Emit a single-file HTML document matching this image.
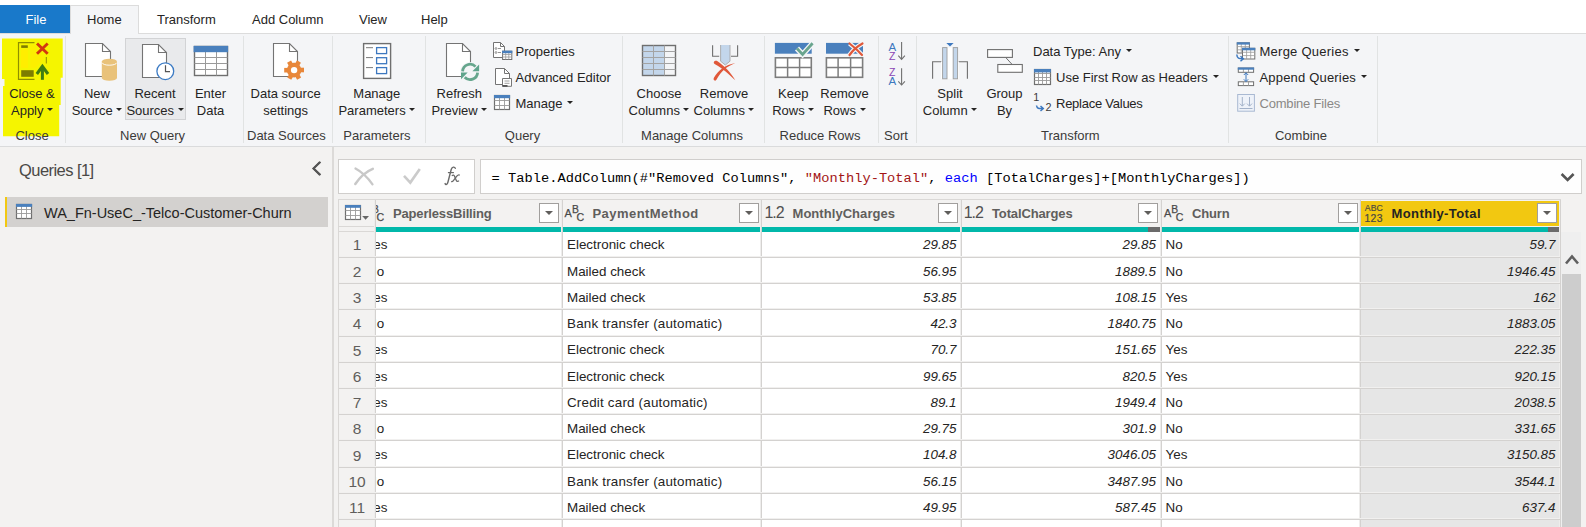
<!DOCTYPE html><html><head><meta charset="utf-8"><style>
html,body{margin:0;padding:0}
body{width:1586px;height:527px;overflow:hidden;position:relative;background:#f3f2f1;font-family:"Liberation Sans",sans-serif}
.t{position:absolute;white-space:nowrap}
.r{position:absolute}
.s{position:absolute;overflow:visible}
.dd{display:inline-block;width:0;height:0;border-left:3px solid transparent;border-right:3px solid transparent;border-top:3px solid #252423;margin-left:5px;vertical-align:4px}
</style></head><body>
<div class="r" style="left:0px;top:0px;width:1586px;height:33px;background:#ffffff;"></div><div class="r" style="left:0px;top:33px;width:1586px;height:114px;background:#f4f5f7;"></div><div class="r" style="left:0px;top:33px;width:1586px;height:1px;background:#dcdcdc;"></div><div class="r" style="left:0px;top:146px;width:1586px;height:1px;background:#dadbdc;"></div><div class="r" style="left:0px;top:5px;width:70px;height:28px;background:#1979ca;"></div><div class="t" style="left:25.50px;top:13.00px;font-size:13px;line-height:13px;color:#ffffff;font-weight:normal;font-style:normal;font-family:'Liberation Sans', sans-serif;">File</div><div class="r" style="left:70px;top:5px;width:69px;height:29px;background:#f4f5f7;box-sizing:border-box;border:1px solid #dcdcdc;border-bottom:none"></div><div class="t" style="left:87.00px;top:13.00px;font-size:13px;line-height:13px;color:#252423;font-weight:normal;font-style:normal;font-family:'Liberation Sans', sans-serif;">Home</div><div class="t" style="left:157.00px;top:13.00px;font-size:13px;line-height:13px;color:#252423;font-weight:normal;font-style:normal;font-family:'Liberation Sans', sans-serif;">Transform</div><div class="t" style="left:252.00px;top:13.00px;font-size:13px;line-height:13px;color:#252423;font-weight:normal;font-style:normal;font-family:'Liberation Sans', sans-serif;">Add Column</div><div class="t" style="left:359.00px;top:13.00px;font-size:13px;line-height:13px;color:#252423;font-weight:normal;font-style:normal;font-family:'Liberation Sans', sans-serif;">View</div><div class="t" style="left:421.00px;top:13.00px;font-size:13px;line-height:13px;color:#252423;font-weight:normal;font-style:normal;font-family:'Liberation Sans', sans-serif;">Help</div><div class="r" style="left:65px;top:36px;width:1px;height:107px;background:#e1e3e3;"></div><div class="r" style="left:243px;top:36px;width:1px;height:107px;background:#e1e3e3;"></div><div class="r" style="left:332px;top:36px;width:1px;height:107px;background:#e1e3e3;"></div><div class="r" style="left:425px;top:36px;width:1px;height:107px;background:#e1e3e3;"></div><div class="r" style="left:622px;top:36px;width:1px;height:107px;background:#e1e3e3;"></div><div class="r" style="left:764px;top:36px;width:1px;height:107px;background:#e1e3e3;"></div><div class="r" style="left:878px;top:36px;width:1px;height:107px;background:#e1e3e3;"></div><div class="r" style="left:916px;top:36px;width:1px;height:107px;background:#e1e3e3;"></div><div class="r" style="left:1228px;top:36px;width:1px;height:107px;background:#e1e3e3;"></div><div class="r" style="left:1377px;top:36px;width:1px;height:107px;background:#e1e3e3;"></div><svg class="s" style="left:0;top:0" width="70" height="150"><path d="M2 38.6 H62.7 V77.8 H60.7 V105 H59.2 V136.3 H3 V86 H4.5 V79 H2 Z" fill="#f5f500"/></svg><div class="r" style="left:125px;top:38px;width:61px;height:82px;background:#e9eaec;box-sizing:border-box;border:1px solid #d2d3d5"></div><svg class="s" style="left:0;top:0" width="1586" height="150" viewBox="0 0 1586 150"><rect x="20.9" y="49.6" width="7.1" height="18.3" fill="#ffee00"/><path d="M30.3 45 H34 L44 58.3 L35.5 68 H30.3 Z" fill="#fcef00"/><path d="M34.5 42.7 H18.5 V79.3 H34.5" fill="none" stroke="#8f8f00" stroke-width="1.2"/><line x1="46.3" y1="57" x2="46.3" y2="63.5" stroke="#8f8f00" stroke-width="1"/><rect x="21.2" y="45.3" width="6.6" height="2.6" fill="#7d7d00"/><rect x="21.2" y="70.2" width="12.5" height="6.6" fill="#7d7d00"/><path d="M37 43.5 L47.7 53.7 M47.7 43.5 L37 53.7" stroke="#d2380f" stroke-width="2.9"/><path d="M36.8 74 L42.4 66.3 L48 74" fill="none" stroke="#3f7d12" stroke-width="3"/><line x1="42.4" y1="66.5" x2="42.4" y2="79.8" stroke="#3f7d12" stroke-width="3"/><path d="M85.5 43.5 H102.5 L110.5 51.5 V76.5 H85.5 Z" fill="#fff" stroke="#747474" stroke-width="1.1"/><path d="M102.5 43.5 V51.5 H110.5" fill="none" stroke="#747474" stroke-width="1.1"/><path d="M101.8 61.5 A7.6 2.8 0 0 1 117 61.5 V78 A7.6 2.8 0 0 1 101.8 78 Z" fill="#e9c27a"/><path d="M102.3 62.8 A7.1 2.4 0 0 0 116.5 62.8" fill="none" stroke="#fff" stroke-width="0.9"/><path d="M142.5 44.5 H158.5 L166.5 52.5 V77.5 H142.5 Z" fill="#fff" stroke="#747474" stroke-width="1.1"/><path d="M158.5 44.5 V52.5 H166.5" fill="none" stroke="#747474" stroke-width="1.1"/><circle cx="165.3" cy="71.2" r="8.4" fill="#fff" stroke="#3c7bc4" stroke-width="1.3"/><path d="M165.5 65.2 V71.6 H170" fill="none" stroke="#555" stroke-width="1.2"/><rect x="194.5" y="46.5" width="33.0" height="29.0" fill="#fff" stroke="#6f6f6f" stroke-width="1.4"/><line x1="205.5" y1="46.5" x2="205.5" y2="75.5" stroke="#9a9a9a" stroke-width="1.0"/><line x1="216.5" y1="46.5" x2="216.5" y2="75.5" stroke="#9a9a9a" stroke-width="1.0"/><line x1="194.5" y1="57.5" x2="227.5" y2="57.5" stroke="#9a9a9a" stroke-width="1.0"/><line x1="194.5" y1="63.5" x2="227.5" y2="63.5" stroke="#9a9a9a" stroke-width="1.0"/><line x1="194.5" y1="69.5" x2="227.5" y2="69.5" stroke="#9a9a9a" stroke-width="1.0"/><rect x="193.6" y="45.9" width="34.5" height="6.3" fill="#4a80bd"/><path d="M273.5 43.5 H289.5 L297.5 51.5 V76.5 H273.5 Z" fill="#fff" stroke="#747474" stroke-width="1.1"/><path d="M289.5 43.5 V51.5 H297.5" fill="none" stroke="#747474" stroke-width="1.1"/><rect x="288" y="62" width="13" height="16" fill="#f4f5f7"/><rect x="-2.4" y="-9.9" width="4.6" height="4" transform="translate(294.1 70.1) rotate(30)" fill="#e8873a"/><rect x="-2.4" y="-9.9" width="4.6" height="4" transform="translate(294.1 70.1) rotate(90)" fill="#e8873a"/><rect x="-2.4" y="-9.9" width="4.6" height="4" transform="translate(294.1 70.1) rotate(150)" fill="#e8873a"/><rect x="-2.4" y="-9.9" width="4.6" height="4" transform="translate(294.1 70.1) rotate(210)" fill="#e8873a"/><rect x="-2.4" y="-9.9" width="4.6" height="4" transform="translate(294.1 70.1) rotate(270)" fill="#e8873a"/><rect x="-2.4" y="-9.9" width="4.6" height="4" transform="translate(294.1 70.1) rotate(330)" fill="#e8873a"/><circle cx="294.1" cy="70.1" r="7.3" fill="#e8873a"/><circle cx="294.1" cy="70.1" r="3.2" fill="#fff"/><rect x="363.6" y="43.6" width="27" height="34.8" fill="#fff" stroke="#6f6f6f" stroke-width="1.4"/><line x1="366" y1="47.7" x2="373" y2="47.7" stroke="#7a7a7a" stroke-width="1"/><line x1="366" y1="57.6" x2="373" y2="57.6" stroke="#7a7a7a" stroke-width="1"/><line x1="366" y1="67.6" x2="373" y2="67.6" stroke="#7a7a7a" stroke-width="1"/><rect x="376.6" y="47.6" width="10" height="6" fill="#fff" stroke="#3d78bf" stroke-width="1.3"/><rect x="376.6" y="57.7" width="10" height="6" fill="#fff" stroke="#3d78bf" stroke-width="1.3"/><rect x="376.6" y="67.6" width="10" height="6" fill="#fff" stroke="#3d78bf" stroke-width="1.3"/><path d="M446.5 43.5 H462.5 L470.5 51.5 V76.5 H446.5 Z" fill="#fff" stroke="#747474" stroke-width="1.1"/><path d="M462.5 43.5 V51.5 H470.5" fill="none" stroke="#747474" stroke-width="1.1"/><circle cx="470.1" cy="71.9" r="10" fill="#f4f5f7"/><path d="M462.6 71.3 A7.5 7.5 0 0 1 475.5 66.6" fill="none" stroke="#66a68d" stroke-width="2.8"/><path d="M479.1 64.6 V71.3 H472.4 Z" fill="#5fa48c"/><path d="M477.6 72.6 A7.5 7.5 0 0 1 464.7 77.3" fill="none" stroke="#66a68d" stroke-width="2.8"/><path d="M461 79.3 V72.6 H467.7 Z" fill="#5fa48c"/><path d="M493.5 42.5 H500.5 L504.5 46.5 V57.5 H493.5 Z" fill="#fff" stroke="#747474" stroke-width="1"/><path d="M500.5 42.5 V46.5 H504.5" fill="none" stroke="#747474" stroke-width="1"/><circle cx="496" cy="48.5" r="0.9" fill="none" stroke="#777" stroke-width="0.8"/><line x1="498" y1="48.5" x2="501" y2="48.5" stroke="#777" stroke-width="0.8"/><circle cx="496" cy="52.5" r="0.9" fill="none" stroke="#777" stroke-width="0.8"/><line x1="498" y1="52.5" x2="501" y2="52.5" stroke="#777" stroke-width="0.8"/><rect x="502.6" y="51.2" width="9.199999999999989" height="8.299999999999997" fill="#fff" stroke="#6f6f6f" stroke-width="1"/><line x1="505.7" y1="51.2" x2="505.7" y2="59.5" stroke="#9a9a9a" stroke-width="0.8"/><line x1="508.8" y1="51.2" x2="508.8" y2="59.5" stroke="#9a9a9a" stroke-width="0.8"/><line x1="502.6" y1="54.5" x2="511.8" y2="54.5" stroke="#9a9a9a" stroke-width="0.8"/><line x1="502.6" y1="57" x2="511.8" y2="57" stroke="#9a9a9a" stroke-width="0.8"/><rect x="502.1" y="50.7" width="10.2" height="2.5" fill="#4a80bd"/><path d="M495.5 68.5 H504.5 L509.5 73.5 V84.5 H495.5 Z" fill="#fff" stroke="#747474" stroke-width="1"/><path d="M504.5 68.5 V73.5 H509.5" fill="none" stroke="#747474" stroke-width="1"/><path d="M502.5 78.5 H511.5 V86.3 H502.5 Z" fill="#fff" stroke="#777" stroke-width="1"/><line x1="504.5" y1="81" x2="509.5" y2="81" stroke="#888" stroke-width="0.8"/><line x1="504.5" y1="83.3" x2="509.5" y2="83.3" stroke="#888" stroke-width="0.8"/><rect x="502.5" y="85" width="5" height="1.8" fill="#555"/><rect x="494.5" y="95.5" width="15.0" height="14.0" fill="#fff" stroke="#6f6f6f" stroke-width="1.2"/><line x1="499.5" y1="95.5" x2="499.5" y2="109.5" stroke="#9a9a9a" stroke-width="0.9"/><line x1="504.5" y1="95.5" x2="504.5" y2="109.5" stroke="#9a9a9a" stroke-width="0.9"/><line x1="494.5" y1="100.5" x2="509.5" y2="100.5" stroke="#9a9a9a" stroke-width="0.9"/><line x1="494.5" y1="105.5" x2="509.5" y2="105.5" stroke="#9a9a9a" stroke-width="0.9"/><rect x="494" y="95" width="16.1" height="3.2" fill="#4a80bd"/><rect x="642.6" y="45.5" width="22" height="30" fill="#c3d6eb"/><rect x="642.5" y="45.5" width="33.0" height="30.0" fill="none" stroke="#6f6f6f" stroke-width="1.4"/><line x1="653.5" y1="45.5" x2="653.5" y2="75.5" stroke="#a3a3a3" stroke-width="1.0"/><line x1="664.5" y1="45.5" x2="664.5" y2="75.5" stroke="#a3a3a3" stroke-width="1.0"/><line x1="642.5" y1="51.5" x2="675.5" y2="51.5" stroke="#a3a3a3" stroke-width="1.0"/><line x1="642.5" y1="57.5" x2="675.5" y2="57.5" stroke="#a3a3a3" stroke-width="1.0"/><line x1="642.5" y1="63.5" x2="675.5" y2="63.5" stroke="#a3a3a3" stroke-width="1.0"/><line x1="642.5" y1="69.5" x2="675.5" y2="69.5" stroke="#a3a3a3" stroke-width="1.0"/><path d="M712.6 45.2 V56.3 H719.2 M737.6 45.2 V56.3 H731" fill="none" stroke="#6f6f6f" stroke-width="1.1"/><path d="M720.6 45 H730 V61.2 L725.3 65 L720.6 61.2 Z" fill="#c3d6eb"/><path d="M720.6 45 V61.2 L725.3 65 L730 61.2 V45" fill="none" stroke="#a8a8a8" stroke-width="0.9"/><path d="M713.8 62.3 C714.5 60.6 716.2 60.4 717.5 61.2 C724 65.5 730.5 72 735.3 80.3 C729.5 74.5 722 68 715 64.2 C714.2 63.8 713.6 63.2 713.8 62.3 Z" fill="#e0583a"/><path d="M714.8 80.6 C713.5 80.3 713.3 79 713.9 77.8 C718.5 70 725 65 735.3 63 C726.5 66.5 721 71.5 717 78.8 C716.5 79.8 715.8 80.8 714.8 80.6 Z" fill="#e0583a"/><rect x="774.9" y="42.9" width="36.8" height="10.8" fill="#4a80bd"/><rect x="775.4" y="57.8" width="35.89999999999998" height="19.5" fill="#fff" stroke="#7d7d7d" stroke-width="1.6"/><line x1="787.6" y1="57.8" x2="787.6" y2="77.3" stroke="#7d7d7d" stroke-width="1.5"/><line x1="799.6" y1="57.8" x2="799.6" y2="77.3" stroke="#7d7d7d" stroke-width="1.5"/><line x1="775.4" y1="67.5" x2="811.3" y2="67.5" stroke="#7d7d7d" stroke-width="1.5"/><path d="M797 48.5 L802.6 54.5 L812.6 43.3" fill="none" stroke="#f4f5f7" stroke-width="5.5"/><path d="M797 48.5 L802.6 54.5 L812.6 43.3" fill="none" stroke="#6aa58e" stroke-width="2.8"/><rect x="826" y="42.9" width="37" height="10.8" fill="#4a80bd"/><rect x="826.4" y="57.8" width="36.200000000000045" height="19.5" fill="#fff" stroke="#7d7d7d" stroke-width="1.6"/><line x1="838.1" y1="57.8" x2="838.1" y2="77.3" stroke="#7d7d7d" stroke-width="1.5"/><line x1="850.6" y1="57.8" x2="850.6" y2="77.3" stroke="#7d7d7d" stroke-width="1.5"/><line x1="826.4" y1="67.5" x2="862.6" y2="67.5" stroke="#7d7d7d" stroke-width="1.5"/><path d="M849.5 43.5 C854 47 858 50.5 862 55 M849.5 55 C853 50 857 46.5 862.5 43.5" fill="none" stroke="#f4f5f7" stroke-width="4.5"/><path d="M849.5 43.5 C854 47 858 50.5 862 55 M849.5 55 C853 50 857 46.5 862.5 43.5" fill="none" stroke="#e0583a" stroke-width="2.2" stroke-linecap="round"/><text x="888.6" y="50.8" font-family="Liberation Sans" font-size="11.5" fill="#3d78bf">A</text><text x="889" y="59.6" font-family="Liberation Sans" font-size="10.5" fill="#8a44b4">Z</text><text x="889" y="75.5" font-family="Liberation Sans" font-size="10.5" fill="#8a44b4">Z</text><text x="888.6" y="85.4" font-family="Liberation Sans" font-size="11.5" fill="#3d78bf">A</text><line x1="901.6" y1="42" x2="901.6" y2="59.1" stroke="#707070" stroke-width="1.1"/><path d="M898.3 55.6 L901.6 59.300000000000004 L904.9 55.6" fill="none" stroke="#707070" stroke-width="1.1"/><line x1="901.6" y1="68.2" x2="901.6" y2="84.8" stroke="#707070" stroke-width="1.1"/><path d="M898.3 81.3 L901.6 85.0 L904.9 81.3" fill="none" stroke="#707070" stroke-width="1.1"/><path d="M932.6 78.8 V61.7 H941.5 M958.5 61.7 H967.4 V78.8" fill="none" stroke="#6f6f6f" stroke-width="1.1"/><rect x="941" y="61.6" width="4" height="17.2" fill="#fff"/><rect x="958" y="61.6" width="1" height="17.2" fill="#fff"/><rect x="947.2" y="47.6" width="5.6" height="31.2" fill="#fff"/><rect x="942.6" y="47.6" width="4.4" height="31.2" fill="#c3d6eb" stroke="#9d9d9d" stroke-width="0.9"/><rect x="953.2" y="47.6" width="4.4" height="31.2" fill="#c3d6eb" stroke="#9d9d9d" stroke-width="0.9"/><path d="M946.3 42.9 H953.6 L950 46.4 Z" fill="#3d78bf"/><rect x="987.6" y="49.6" width="24.8" height="7.8" fill="#fff" stroke="#6f6f6f" stroke-width="1.1"/><rect x="997.8" y="64.5" width="24.5" height="7.8" fill="#fff" stroke="#6f6f6f" stroke-width="1.1"/><line x1="1005.8" y1="57.6" x2="1012" y2="64.3" stroke="#6f6f6f" stroke-width="1"/><rect x="1034.5" y="69.5" width="16.0" height="15.0" fill="#fff" stroke="#6f6f6f" stroke-width="1.2"/><line x1="1038.5" y1="69.5" x2="1038.5" y2="84.5" stroke="#9a9a9a" stroke-width="0.9"/><line x1="1042.5" y1="69.5" x2="1042.5" y2="84.5" stroke="#9a9a9a" stroke-width="0.9"/><line x1="1046.5" y1="69.5" x2="1046.5" y2="84.5" stroke="#9a9a9a" stroke-width="0.9"/><line x1="1034.5" y1="73.5" x2="1050.5" y2="73.5" stroke="#9a9a9a" stroke-width="0.9"/><line x1="1034.5" y1="77.5" x2="1050.5" y2="77.5" stroke="#9a9a9a" stroke-width="0.9"/><line x1="1034.5" y1="80.5" x2="1050.5" y2="80.5" stroke="#9a9a9a" stroke-width="0.9"/><rect x="1034" y="69" width="16.9" height="3.4" fill="#4a80bd"/><text x="1033.2" y="101.3" font-family="Liberation Sans" font-size="10.8" fill="#3a3a3a">1</text><text x="1045.6" y="111.2" font-family="Liberation Sans" font-size="10.8" fill="#3a3a3a">2</text><path d="M1036.5 105.5 C1037 109 1039.5 108.5 1042.8 108.5 M1040.5 106 L1043.3 108.5 L1040.5 111" fill="none" stroke="#3d78bf" stroke-width="1.5"/><rect x="1237.2" y="42.8" width="12.200000000000045" height="10.200000000000003" fill="#fff" stroke="#6f6f6f" stroke-width="1"/><line x1="1241.3" y1="42.8" x2="1241.3" y2="53" stroke="#9a9a9a" stroke-width="0.8"/><line x1="1245.3" y1="42.8" x2="1245.3" y2="53" stroke="#9a9a9a" stroke-width="0.8"/><line x1="1237.2" y1="46.6" x2="1249.4" y2="46.6" stroke="#9a9a9a" stroke-width="0.8"/><line x1="1237.2" y1="49.8" x2="1249.4" y2="49.8" stroke="#9a9a9a" stroke-width="0.8"/><rect x="1236.8" y="42.3" width="13" height="2.3" fill="#4a80bd"/><rect x="1242.5" y="48.3" width="12.299999999999955" height="10.700000000000003" fill="#fff" stroke="#6f6f6f" stroke-width="1"/><line x1="1246.6" y1="48.3" x2="1246.6" y2="59" stroke="#9a9a9a" stroke-width="0.8"/><line x1="1250.7" y1="48.3" x2="1250.7" y2="59" stroke="#9a9a9a" stroke-width="0.8"/><line x1="1242.5" y1="52.3" x2="1254.8" y2="52.3" stroke="#9a9a9a" stroke-width="0.8"/><line x1="1242.5" y1="55.6" x2="1254.8" y2="55.6" stroke="#9a9a9a" stroke-width="0.8"/><rect x="1242" y="47.8" width="13.3" height="2.5" fill="#4a80bd"/><path d="M1236.8 54.5 C1237 58.5 1239 58.7 1242.8 58.7 M1240.5 56.2 L1243.3 58.7 L1240.5 61.2" fill="none" stroke="#3d78bf" stroke-width="1.5"/><rect x="1238.3" y="68" width="15.299999999999955" height="4.299999999999997" fill="#fff" stroke="#6f6f6f" stroke-width="1"/><line x1="1243.4" y1="68" x2="1243.4" y2="72.3" stroke="#9a9a9a" stroke-width="0.9"/><line x1="1248.5" y1="68" x2="1248.5" y2="72.3" stroke="#9a9a9a" stroke-width="0.9"/><rect x="1237.8" y="67.5" width="16.3" height="2.2" fill="#4a80bd"/><rect x="1238.3" y="81.8" width="15.299999999999955" height="3.799999999999997" fill="#fff" stroke="#6f6f6f" stroke-width="1"/><line x1="1243.4" y1="81.8" x2="1243.4" y2="85.6" stroke="#9a9a9a" stroke-width="0.9"/><line x1="1248.5" y1="81.8" x2="1248.5" y2="85.6" stroke="#9a9a9a" stroke-width="0.9"/><path d="M1246 72.8 V81.5 M1243.8 75 L1246 72.8 L1248.2 75 M1243.8 79.3 L1246 81.5 L1248.2 79.3" fill="none" stroke="#3d78bf" stroke-width="1"/><rect x="1237.7" y="94.5" width="16.7" height="16.7" fill="#eef2f9" stroke="#a9b9d2" stroke-width="1"/><path d="M1242.3 97 V106 M1239.8 103.6 L1242.3 106.2 L1244.8 103.6 M1249.5 97 V106 M1247 103.6 L1249.5 106.2 L1252 103.6 M1239.5 108.5 H1252.5" fill="none" stroke="#a3b2c9" stroke-width="1"/></svg><div class="t" style="left:-28.00px;top:87.00px;width:120px;text-align:center;font-size:13px;line-height:13px;color:#252423;font-weight:normal;font-style:normal;font-family:'Liberation Sans', sans-serif;">Close &amp;</div><div class="t" style="left:-28.00px;top:104.00px;width:120px;text-align:center;font-size:13px;line-height:13px;color:#252423;font-weight:normal;font-style:normal;font-family:'Liberation Sans', sans-serif;">Apply<i class="dd" style="margin-left:3.5px"></i></div><div class="t" style="left:-18.00px;top:129.00px;width:100px;text-align:center;font-size:13px;line-height:13px;color:#3b3a39;font-weight:normal;font-style:normal;font-family:'Liberation Sans', sans-serif;">Close</div><div class="t" style="left:37.00px;top:87.00px;width:120px;text-align:center;font-size:13px;line-height:13px;color:#252423;font-weight:normal;font-style:normal;font-family:'Liberation Sans', sans-serif;">New</div><div class="t" style="left:37.00px;top:104.00px;width:120px;text-align:center;font-size:13px;line-height:13px;color:#252423;font-weight:normal;font-style:normal;font-family:'Liberation Sans', sans-serif;">Source<i class="dd" style="margin-left:3.5px"></i></div><div class="t" style="left:95.00px;top:87.00px;width:120px;text-align:center;font-size:13px;line-height:13px;color:#252423;font-weight:normal;font-style:normal;font-family:'Liberation Sans', sans-serif;">Recent</div><div class="t" style="left:95.00px;top:104.00px;width:120px;text-align:center;font-size:13px;line-height:13px;color:#252423;font-weight:normal;font-style:normal;font-family:'Liberation Sans', sans-serif;">Sources<i class="dd" style="margin-left:3.5px"></i></div><div class="t" style="left:150.50px;top:87.00px;width:120px;text-align:center;font-size:13px;line-height:13px;color:#252423;font-weight:normal;font-style:normal;font-family:'Liberation Sans', sans-serif;">Enter</div><div class="t" style="left:150.50px;top:104.00px;width:120px;text-align:center;font-size:13px;line-height:13px;color:#252423;font-weight:normal;font-style:normal;font-family:'Liberation Sans', sans-serif;">Data</div><div class="t" style="left:92.60px;top:129.00px;width:120px;text-align:center;font-size:13px;line-height:13px;color:#3b3a39;font-weight:normal;font-style:normal;font-family:'Liberation Sans', sans-serif;">New Query</div><div class="t" style="left:225.60px;top:87.00px;width:120px;text-align:center;font-size:13px;line-height:13px;color:#252423;font-weight:normal;font-style:normal;font-family:'Liberation Sans', sans-serif;">Data source</div><div class="t" style="left:225.60px;top:104.00px;width:120px;text-align:center;font-size:13px;line-height:13px;color:#252423;font-weight:normal;font-style:normal;font-family:'Liberation Sans', sans-serif;">settings</div><div class="t" style="left:226.40px;top:129.00px;width:120px;text-align:center;font-size:13px;line-height:13px;color:#3b3a39;font-weight:normal;font-style:normal;font-family:'Liberation Sans', sans-serif;">Data Sources</div><div class="t" style="left:316.80px;top:87.00px;width:120px;text-align:center;font-size:13px;line-height:13px;color:#252423;font-weight:normal;font-style:normal;font-family:'Liberation Sans', sans-serif;">Manage</div><div class="t" style="left:316.80px;top:104.00px;width:120px;text-align:center;font-size:13px;line-height:13px;color:#252423;font-weight:normal;font-style:normal;font-family:'Liberation Sans', sans-serif;">Parameters<i class="dd" style="margin-left:3.5px"></i></div><div class="t" style="left:316.90px;top:129.00px;width:120px;text-align:center;font-size:13px;line-height:13px;color:#3b3a39;font-weight:normal;font-style:normal;font-family:'Liberation Sans', sans-serif;">Parameters</div><div class="t" style="left:399.30px;top:87.00px;width:120px;text-align:center;font-size:13px;line-height:13px;color:#252423;font-weight:normal;font-style:normal;font-family:'Liberation Sans', sans-serif;">Refresh</div><div class="t" style="left:399.30px;top:104.00px;width:120px;text-align:center;font-size:13px;line-height:13px;color:#252423;font-weight:normal;font-style:normal;font-family:'Liberation Sans', sans-serif;">Preview<i class="dd" style="margin-left:3.5px"></i></div><div class="t" style="left:462.50px;top:129.00px;width:120px;text-align:center;font-size:13px;line-height:13px;color:#3b3a39;font-weight:normal;font-style:normal;font-family:'Liberation Sans', sans-serif;">Query</div><div class="t" style="left:599.00px;top:87.00px;width:120px;text-align:center;font-size:13px;line-height:13px;color:#252423;font-weight:normal;font-style:normal;font-family:'Liberation Sans', sans-serif;">Choose</div><div class="t" style="left:599.00px;top:104.00px;width:120px;text-align:center;font-size:13px;line-height:13px;color:#252423;font-weight:normal;font-style:normal;font-family:'Liberation Sans', sans-serif;">Columns<i class="dd" style="margin-left:3.5px"></i></div><div class="t" style="left:664.00px;top:87.00px;width:120px;text-align:center;font-size:13px;line-height:13px;color:#252423;font-weight:normal;font-style:normal;font-family:'Liberation Sans', sans-serif;">Remove</div><div class="t" style="left:664.00px;top:104.00px;width:120px;text-align:center;font-size:13px;line-height:13px;color:#252423;font-weight:normal;font-style:normal;font-family:'Liberation Sans', sans-serif;">Columns<i class="dd" style="margin-left:3.5px"></i></div><div class="t" style="left:612.00px;top:129.00px;width:160px;text-align:center;font-size:13px;line-height:13px;color:#3b3a39;font-weight:normal;font-style:normal;font-family:'Liberation Sans', sans-serif;">Manage Columns</div><div class="t" style="left:733.20px;top:87.00px;width:120px;text-align:center;font-size:13px;line-height:13px;color:#252423;font-weight:normal;font-style:normal;font-family:'Liberation Sans', sans-serif;">Keep</div><div class="t" style="left:733.20px;top:104.00px;width:120px;text-align:center;font-size:13px;line-height:13px;color:#252423;font-weight:normal;font-style:normal;font-family:'Liberation Sans', sans-serif;">Rows<i class="dd" style="margin-left:3.5px"></i></div><div class="t" style="left:784.50px;top:87.00px;width:120px;text-align:center;font-size:13px;line-height:13px;color:#252423;font-weight:normal;font-style:normal;font-family:'Liberation Sans', sans-serif;">Remove</div><div class="t" style="left:784.50px;top:104.00px;width:120px;text-align:center;font-size:13px;line-height:13px;color:#252423;font-weight:normal;font-style:normal;font-family:'Liberation Sans', sans-serif;">Rows<i class="dd" style="margin-left:3.5px"></i></div><div class="t" style="left:760.00px;top:129.00px;width:120px;text-align:center;font-size:13px;line-height:13px;color:#3b3a39;font-weight:normal;font-style:normal;font-family:'Liberation Sans', sans-serif;">Reduce Rows</div><div class="t" style="left:866.00px;top:129.00px;width:60px;text-align:center;font-size:13px;line-height:13px;color:#3b3a39;font-weight:normal;font-style:normal;font-family:'Liberation Sans', sans-serif;">Sort</div><div class="t" style="left:890.00px;top:87.00px;width:120px;text-align:center;font-size:13px;line-height:13px;color:#252423;font-weight:normal;font-style:normal;font-family:'Liberation Sans', sans-serif;">Split</div><div class="t" style="left:890.00px;top:104.00px;width:120px;text-align:center;font-size:13px;line-height:13px;color:#252423;font-weight:normal;font-style:normal;font-family:'Liberation Sans', sans-serif;">Column<i class="dd" style="margin-left:3.5px"></i></div><div class="t" style="left:944.50px;top:87.00px;width:120px;text-align:center;font-size:13px;line-height:13px;color:#252423;font-weight:normal;font-style:normal;font-family:'Liberation Sans', sans-serif;">Group</div><div class="t" style="left:944.50px;top:104.00px;width:120px;text-align:center;font-size:13px;line-height:13px;color:#252423;font-weight:normal;font-style:normal;font-family:'Liberation Sans', sans-serif;">By</div><div class="t" style="left:1010.30px;top:129.00px;width:120px;text-align:center;font-size:13px;line-height:13px;color:#3b3a39;font-weight:normal;font-style:normal;font-family:'Liberation Sans', sans-serif;">Transform</div><div class="t" style="left:1241.00px;top:129.00px;width:120px;text-align:center;font-size:13px;line-height:13px;color:#3b3a39;font-weight:normal;font-style:normal;font-family:'Liberation Sans', sans-serif;">Combine</div><div class="t" style="left:515.50px;top:44.80px;font-size:13px;line-height:13px;color:#252423;font-weight:normal;font-style:normal;font-family:'Liberation Sans', sans-serif;">Properties</div><div class="t" style="left:515.50px;top:70.60px;font-size:13px;line-height:13px;color:#252423;font-weight:normal;font-style:normal;font-family:'Liberation Sans', sans-serif;">Advanced Editor</div><div class="t" style="left:515.50px;top:96.90px;font-size:13px;line-height:13px;color:#252423;font-weight:normal;font-style:normal;font-family:'Liberation Sans', sans-serif;">Manage<i class="dd"></i></div><div class="t" style="left:1033.00px;top:44.80px;font-size:13px;line-height:13px;color:#252423;font-weight:normal;font-style:normal;font-family:'Liberation Sans', sans-serif;">Data Type: Any<i class="dd"></i></div><div class="t" style="left:1056.00px;top:70.60px;font-size:13px;line-height:13px;color:#252423;font-weight:normal;font-style:normal;font-family:'Liberation Sans', sans-serif;">Use First Row as Headers<i class="dd"></i></div><div class="t" style="left:1056.00px;top:96.90px;font-size:13px;line-height:13px;color:#252423;font-weight:normal;font-style:normal;font-family:'Liberation Sans', sans-serif;letter-spacing:-0.25px">Replace Values</div><div class="t" style="left:1259.50px;top:44.80px;font-size:13px;line-height:13px;color:#252423;font-weight:normal;font-style:normal;font-family:'Liberation Sans', sans-serif;letter-spacing:0.25px">Merge Queries<i class="dd"></i></div><div class="t" style="left:1259.50px;top:70.60px;font-size:13px;line-height:13px;color:#252423;font-weight:normal;font-style:normal;font-family:'Liberation Sans', sans-serif;letter-spacing:0.18px">Append Queries<i class="dd"></i></div><div class="t" style="left:1259.50px;top:96.90px;font-size:13px;line-height:13px;color:#8a8886;font-weight:normal;font-style:normal;font-family:'Liberation Sans', sans-serif;letter-spacing:-0.2px">Combine Files</div><div class="r" style="left:332px;top:147px;width:2px;height:380px;background:#dcdad8;"></div><div class="t" style="left:19.00px;top:162.23px;font-size:16.5px;line-height:16.5px;color:#4a4846;font-weight:normal;font-style:normal;font-family:'Liberation Sans', sans-serif;letter-spacing:-0.55px">Queries [1]</div><svg class="s" style="left:310px;top:160px" width="14" height="18" viewBox="0 0 14 18"><path d="M10 2 L3.5 8.5 L10 15" fill="none" stroke="#555" stroke-width="2"/></svg><div class="r" style="left:5px;top:197px;width:2px;height:30px;background:#f2c811;"></div><div class="r" style="left:7px;top:197px;width:321px;height:30px;background:#d3d1cf;"></div><div class="t" style="left:44.00px;top:206.13px;font-size:14.5px;line-height:14.5px;color:#252423;font-weight:normal;font-style:normal;font-family:'Liberation Sans', sans-serif;">WA_Fn-UseC_-Telco-Customer-Churn</div><div class="r" style="left:338px;top:159px;width:137px;height:35px;background:#ffffff;box-sizing:border-box;border:1px solid #d0cecc"></div><div class="r" style="left:480px;top:159px;width:1102px;height:35px;background:#fefefe;box-sizing:border-box;border:1px solid #d0cecc"></div><div class="t" style="left:491.50px;top:171.90px;font-size:13.7px;line-height:13.7px;color:#000000;font-weight:normal;font-style:normal;font-family:'Liberation Mono', monospace;letter-spacing:0.028px">= Table.AddColumn(#"Removed Columns", <span style="color:#a31515">"Monthly-Total"</span>, <span style="color:#0000ff">each</span> [TotalCharges]+[MonthlyCharges])</div><div class="r" style="left:338px;top:199px;width:1223px;height:328px;background:#ffffff;"></div><div class="r" style="left:338px;top:199px;width:1223px;height:1px;background:#dad8d6;"></div><div class="r" style="left:338px;top:199px;width:1px;height:328px;background:#dad8d6;"></div><div class="r" style="left:339px;top:200px;width:1222px;height:27px;background:#f3f2f1;"></div><div class="r" style="left:339px;top:227px;width:36px;height:300px;background:#f3f2f1;"></div><div class="r" style="left:1361px;top:201px;width:199px;height:25px;background:#f2c811;"></div><div class="r" style="left:1361px;top:232px;width:199px;height:295px;background:#e6e6e6;"></div><div class="r" style="left:376px;top:227px;width:1184px;height:5px;background:#01b8aa;"></div><div class="r" style="left:1148px;top:227px;width:13px;height:5px;background:#6b6b6b;"></div><div class="r" style="left:1548px;top:227px;width:12px;height:5px;background:#6b6b6b;"></div><div class="r" style="left:339px;top:226px;width:36px;height:1px;background:#dad8d6;"></div><div class="r" style="left:339px;top:231px;width:36px;height:1px;background:#dad8d6;"></div><div class="r" style="left:374px;top:200px;width:1px;height:327px;background:#eeedec;"></div><div class="r" style="left:375px;top:200px;width:1px;height:327px;background:#d4d2d0;"></div><div class="r" style="left:561px;top:200px;width:1px;height:327px;background:#eeedec;"></div><div class="r" style="left:562px;top:200px;width:1px;height:327px;background:#d4d2d0;"></div><div class="r" style="left:760px;top:200px;width:1px;height:327px;background:#eeedec;"></div><div class="r" style="left:761px;top:200px;width:1px;height:327px;background:#d4d2d0;"></div><div class="r" style="left:960px;top:200px;width:1px;height:327px;background:#eeedec;"></div><div class="r" style="left:961px;top:200px;width:1px;height:327px;background:#d4d2d0;"></div><div class="r" style="left:1160px;top:200px;width:1px;height:327px;background:#eeedec;"></div><div class="r" style="left:1161px;top:200px;width:1px;height:327px;background:#d4d2d0;"></div><div class="r" style="left:1359px;top:200px;width:1px;height:327px;background:#eeedec;"></div><div class="r" style="left:1360px;top:200px;width:1px;height:327px;background:#d4d2d0;"></div><div class="r" style="left:1559px;top:200px;width:1px;height:327px;background:#eeedec;"></div><div class="r" style="left:1560px;top:200px;width:1px;height:327px;background:#d4d2d0;"></div><div class="r" style="left:339px;top:256px;width:1221px;height:1px;background:#f1f0ef;"></div><div class="r" style="left:339px;top:257px;width:1221px;height:1px;background:#d4d2d0;"></div><div class="r" style="left:339px;top:282px;width:1221px;height:1px;background:#f1f0ef;"></div><div class="r" style="left:339px;top:283px;width:1221px;height:1px;background:#d4d2d0;"></div><div class="r" style="left:339px;top:308px;width:1221px;height:1px;background:#f1f0ef;"></div><div class="r" style="left:339px;top:309px;width:1221px;height:1px;background:#d4d2d0;"></div><div class="r" style="left:339px;top:335px;width:1221px;height:1px;background:#f1f0ef;"></div><div class="r" style="left:339px;top:336px;width:1221px;height:1px;background:#d4d2d0;"></div><div class="r" style="left:339px;top:361px;width:1221px;height:1px;background:#f1f0ef;"></div><div class="r" style="left:339px;top:362px;width:1221px;height:1px;background:#d4d2d0;"></div><div class="r" style="left:339px;top:387px;width:1221px;height:1px;background:#f1f0ef;"></div><div class="r" style="left:339px;top:388px;width:1221px;height:1px;background:#d4d2d0;"></div><div class="r" style="left:339px;top:413px;width:1221px;height:1px;background:#f1f0ef;"></div><div class="r" style="left:339px;top:414px;width:1221px;height:1px;background:#d4d2d0;"></div><div class="r" style="left:339px;top:439px;width:1221px;height:1px;background:#f1f0ef;"></div><div class="r" style="left:339px;top:440px;width:1221px;height:1px;background:#d4d2d0;"></div><div class="r" style="left:339px;top:466px;width:1221px;height:1px;background:#f1f0ef;"></div><div class="r" style="left:339px;top:467px;width:1221px;height:1px;background:#d4d2d0;"></div><div class="r" style="left:339px;top:492px;width:1221px;height:1px;background:#f1f0ef;"></div><div class="r" style="left:339px;top:493px;width:1221px;height:1px;background:#d4d2d0;"></div><div class="r" style="left:339px;top:518px;width:1221px;height:1px;background:#f1f0ef;"></div><div class="r" style="left:339px;top:519px;width:1221px;height:1px;background:#d4d2d0;"></div><div class="r" style="left:539px;top:203px;width:20px;height:20px;box-sizing:border-box;background:#fff;border:1px solid #a19f9d"></div><div class="r" style="left:544.6px;top:211px;width:0;height:0;border-left:4.3px solid transparent;border-right:4.3px solid transparent;border-top:4.2px solid #605e5c"></div><div class="r" style="left:739px;top:203px;width:20px;height:20px;box-sizing:border-box;background:#fff;border:1px solid #a19f9d"></div><div class="r" style="left:744.6px;top:211px;width:0;height:0;border-left:4.3px solid transparent;border-right:4.3px solid transparent;border-top:4.2px solid #605e5c"></div><div class="r" style="left:938px;top:203px;width:20px;height:20px;box-sizing:border-box;background:#fff;border:1px solid #a19f9d"></div><div class="r" style="left:943.6px;top:211px;width:0;height:0;border-left:4.3px solid transparent;border-right:4.3px solid transparent;border-top:4.2px solid #605e5c"></div><div class="r" style="left:1138px;top:203px;width:20px;height:20px;box-sizing:border-box;background:#fff;border:1px solid #a19f9d"></div><div class="r" style="left:1143.6px;top:211px;width:0;height:0;border-left:4.3px solid transparent;border-right:4.3px solid transparent;border-top:4.2px solid #605e5c"></div><div class="r" style="left:1338px;top:203px;width:20px;height:20px;box-sizing:border-box;background:#fff;border:1px solid #a19f9d"></div><div class="r" style="left:1343.6px;top:211px;width:0;height:0;border-left:4.3px solid transparent;border-right:4.3px solid transparent;border-top:4.2px solid #605e5c"></div><div class="r" style="left:1537px;top:203px;width:20px;height:20px;box-sizing:border-box;background:#fff;border:1px solid #a19f9d"></div><div class="r" style="left:1542.6px;top:211px;width:0;height:0;border-left:4.3px solid transparent;border-right:4.3px solid transparent;border-top:4.2px solid #605e5c"></div><div class="t" style="left:393.00px;top:206.60px;font-size:13px;line-height:13px;color:#605e5c;font-weight:bold;font-style:normal;font-family:'Liberation Sans', sans-serif;letter-spacing:-0.16px">PaperlessBilling</div><div class="t" style="left:592.50px;top:206.60px;font-size:13px;line-height:13px;color:#605e5c;font-weight:bold;font-style:normal;font-family:'Liberation Sans', sans-serif;letter-spacing:0.45px">PaymentMethod</div><div class="t" style="left:792.50px;top:206.60px;font-size:13px;line-height:13px;color:#605e5c;font-weight:bold;font-style:normal;font-family:'Liberation Sans', sans-serif;letter-spacing:0.05px">MonthlyCharges</div><div class="t" style="left:992.00px;top:206.60px;font-size:13px;line-height:13px;color:#605e5c;font-weight:bold;font-style:normal;font-family:'Liberation Sans', sans-serif;letter-spacing:-0.13px">TotalCharges</div><div class="t" style="left:1192.00px;top:206.60px;font-size:13px;line-height:13px;color:#605e5c;font-weight:bold;font-style:normal;font-family:'Liberation Sans', sans-serif;letter-spacing:-0.17px">Churn</div><div class="t" style="left:1391.50px;top:206.60px;font-size:13px;line-height:13px;color:#252423;font-weight:bold;font-style:normal;font-family:'Liberation Sans', sans-serif;letter-spacing:0.4px">Monthly-Total</div><div class="t" style="left:764.50px;top:205.36px;font-size:16px;line-height:16px;color:#505050;font-weight:normal;font-style:normal;font-family:'Liberation Sans', sans-serif;letter-spacing:-1.1px">1.2</div><div class="t" style="left:963.80px;top:205.36px;font-size:16px;line-height:16px;color:#505050;font-weight:normal;font-style:normal;font-family:'Liberation Sans', sans-serif;letter-spacing:-1.1px">1.2</div><div class="t" style="left:339.00px;top:237.48px;width:36px;text-align:center;font-size:15.5px;line-height:15.5px;color:#605e5c;font-weight:normal;font-style:normal;font-family:'Liberation Sans', sans-serif;">1</div><div class="t" style="left:567.00px;top:238.26px;font-size:13.4px;line-height:13.4px;color:#252423;font-weight:normal;font-style:normal;font-family:'Liberation Sans', sans-serif;">Electronic check</div><div class="t" style="right:629.50px;top:238.26px;text-align:right;font-size:13.4px;line-height:13.4px;color:#252423;font-weight:normal;font-style:italic;font-family:'Liberation Sans', sans-serif;">29.85</div><div class="t" style="right:430.00px;top:238.26px;text-align:right;font-size:13.4px;line-height:13.4px;color:#252423;font-weight:normal;font-style:italic;font-family:'Liberation Sans', sans-serif;">29.85</div><div class="t" style="left:1165.50px;top:238.26px;font-size:13.4px;line-height:13.4px;color:#252423;font-weight:normal;font-style:normal;font-family:'Liberation Sans', sans-serif;">No</div><div class="t" style="right:30.50px;top:238.26px;text-align:right;font-size:13.4px;line-height:13.4px;color:#252423;font-weight:normal;font-style:italic;font-family:'Liberation Sans', sans-serif;">59.7</div><div class="t" style="left:339.00px;top:263.75px;width:36px;text-align:center;font-size:15.5px;line-height:15.5px;color:#605e5c;font-weight:normal;font-style:normal;font-family:'Liberation Sans', sans-serif;">2</div><div class="t" style="left:567.00px;top:264.53px;font-size:13.4px;line-height:13.4px;color:#252423;font-weight:normal;font-style:normal;font-family:'Liberation Sans', sans-serif;">Mailed check</div><div class="t" style="right:629.50px;top:264.53px;text-align:right;font-size:13.4px;line-height:13.4px;color:#252423;font-weight:normal;font-style:italic;font-family:'Liberation Sans', sans-serif;">56.95</div><div class="t" style="right:430.00px;top:264.53px;text-align:right;font-size:13.4px;line-height:13.4px;color:#252423;font-weight:normal;font-style:italic;font-family:'Liberation Sans', sans-serif;">1889.5</div><div class="t" style="left:1165.50px;top:264.53px;font-size:13.4px;line-height:13.4px;color:#252423;font-weight:normal;font-style:normal;font-family:'Liberation Sans', sans-serif;">No</div><div class="t" style="right:30.50px;top:264.53px;text-align:right;font-size:13.4px;line-height:13.4px;color:#252423;font-weight:normal;font-style:italic;font-family:'Liberation Sans', sans-serif;">1946.45</div><div class="t" style="left:339.00px;top:290.02px;width:36px;text-align:center;font-size:15.5px;line-height:15.5px;color:#605e5c;font-weight:normal;font-style:normal;font-family:'Liberation Sans', sans-serif;">3</div><div class="t" style="left:567.00px;top:290.80px;font-size:13.4px;line-height:13.4px;color:#252423;font-weight:normal;font-style:normal;font-family:'Liberation Sans', sans-serif;">Mailed check</div><div class="t" style="right:629.50px;top:290.80px;text-align:right;font-size:13.4px;line-height:13.4px;color:#252423;font-weight:normal;font-style:italic;font-family:'Liberation Sans', sans-serif;">53.85</div><div class="t" style="right:430.00px;top:290.80px;text-align:right;font-size:13.4px;line-height:13.4px;color:#252423;font-weight:normal;font-style:italic;font-family:'Liberation Sans', sans-serif;">108.15</div><div class="t" style="left:1165.50px;top:290.80px;font-size:13.4px;line-height:13.4px;color:#252423;font-weight:normal;font-style:normal;font-family:'Liberation Sans', sans-serif;">Yes</div><div class="t" style="right:30.50px;top:290.80px;text-align:right;font-size:13.4px;line-height:13.4px;color:#252423;font-weight:normal;font-style:italic;font-family:'Liberation Sans', sans-serif;">162</div><div class="t" style="left:339.00px;top:316.29px;width:36px;text-align:center;font-size:15.5px;line-height:15.5px;color:#605e5c;font-weight:normal;font-style:normal;font-family:'Liberation Sans', sans-serif;">4</div><div class="t" style="left:567.00px;top:317.07px;font-size:13.4px;line-height:13.4px;color:#252423;font-weight:normal;font-style:normal;font-family:'Liberation Sans', sans-serif;letter-spacing:0.2px">Bank transfer (automatic)</div><div class="t" style="right:629.50px;top:317.07px;text-align:right;font-size:13.4px;line-height:13.4px;color:#252423;font-weight:normal;font-style:italic;font-family:'Liberation Sans', sans-serif;">42.3</div><div class="t" style="right:430.00px;top:317.07px;text-align:right;font-size:13.4px;line-height:13.4px;color:#252423;font-weight:normal;font-style:italic;font-family:'Liberation Sans', sans-serif;">1840.75</div><div class="t" style="left:1165.50px;top:317.07px;font-size:13.4px;line-height:13.4px;color:#252423;font-weight:normal;font-style:normal;font-family:'Liberation Sans', sans-serif;">No</div><div class="t" style="right:30.50px;top:317.07px;text-align:right;font-size:13.4px;line-height:13.4px;color:#252423;font-weight:normal;font-style:italic;font-family:'Liberation Sans', sans-serif;">1883.05</div><div class="t" style="left:339.00px;top:342.56px;width:36px;text-align:center;font-size:15.5px;line-height:15.5px;color:#605e5c;font-weight:normal;font-style:normal;font-family:'Liberation Sans', sans-serif;">5</div><div class="t" style="left:567.00px;top:343.34px;font-size:13.4px;line-height:13.4px;color:#252423;font-weight:normal;font-style:normal;font-family:'Liberation Sans', sans-serif;">Electronic check</div><div class="t" style="right:629.50px;top:343.34px;text-align:right;font-size:13.4px;line-height:13.4px;color:#252423;font-weight:normal;font-style:italic;font-family:'Liberation Sans', sans-serif;">70.7</div><div class="t" style="right:430.00px;top:343.34px;text-align:right;font-size:13.4px;line-height:13.4px;color:#252423;font-weight:normal;font-style:italic;font-family:'Liberation Sans', sans-serif;">151.65</div><div class="t" style="left:1165.50px;top:343.34px;font-size:13.4px;line-height:13.4px;color:#252423;font-weight:normal;font-style:normal;font-family:'Liberation Sans', sans-serif;">Yes</div><div class="t" style="right:30.50px;top:343.34px;text-align:right;font-size:13.4px;line-height:13.4px;color:#252423;font-weight:normal;font-style:italic;font-family:'Liberation Sans', sans-serif;">222.35</div><div class="t" style="left:339.00px;top:368.83px;width:36px;text-align:center;font-size:15.5px;line-height:15.5px;color:#605e5c;font-weight:normal;font-style:normal;font-family:'Liberation Sans', sans-serif;">6</div><div class="t" style="left:567.00px;top:369.61px;font-size:13.4px;line-height:13.4px;color:#252423;font-weight:normal;font-style:normal;font-family:'Liberation Sans', sans-serif;">Electronic check</div><div class="t" style="right:629.50px;top:369.61px;text-align:right;font-size:13.4px;line-height:13.4px;color:#252423;font-weight:normal;font-style:italic;font-family:'Liberation Sans', sans-serif;">99.65</div><div class="t" style="right:430.00px;top:369.61px;text-align:right;font-size:13.4px;line-height:13.4px;color:#252423;font-weight:normal;font-style:italic;font-family:'Liberation Sans', sans-serif;">820.5</div><div class="t" style="left:1165.50px;top:369.61px;font-size:13.4px;line-height:13.4px;color:#252423;font-weight:normal;font-style:normal;font-family:'Liberation Sans', sans-serif;">Yes</div><div class="t" style="right:30.50px;top:369.61px;text-align:right;font-size:13.4px;line-height:13.4px;color:#252423;font-weight:normal;font-style:italic;font-family:'Liberation Sans', sans-serif;">920.15</div><div class="t" style="left:339.00px;top:395.10px;width:36px;text-align:center;font-size:15.5px;line-height:15.5px;color:#605e5c;font-weight:normal;font-style:normal;font-family:'Liberation Sans', sans-serif;">7</div><div class="t" style="left:567.00px;top:395.88px;font-size:13.4px;line-height:13.4px;color:#252423;font-weight:normal;font-style:normal;font-family:'Liberation Sans', sans-serif;letter-spacing:0.2px">Credit card (automatic)</div><div class="t" style="right:629.50px;top:395.88px;text-align:right;font-size:13.4px;line-height:13.4px;color:#252423;font-weight:normal;font-style:italic;font-family:'Liberation Sans', sans-serif;">89.1</div><div class="t" style="right:430.00px;top:395.88px;text-align:right;font-size:13.4px;line-height:13.4px;color:#252423;font-weight:normal;font-style:italic;font-family:'Liberation Sans', sans-serif;">1949.4</div><div class="t" style="left:1165.50px;top:395.88px;font-size:13.4px;line-height:13.4px;color:#252423;font-weight:normal;font-style:normal;font-family:'Liberation Sans', sans-serif;">No</div><div class="t" style="right:30.50px;top:395.88px;text-align:right;font-size:13.4px;line-height:13.4px;color:#252423;font-weight:normal;font-style:italic;font-family:'Liberation Sans', sans-serif;">2038.5</div><div class="t" style="left:339.00px;top:421.37px;width:36px;text-align:center;font-size:15.5px;line-height:15.5px;color:#605e5c;font-weight:normal;font-style:normal;font-family:'Liberation Sans', sans-serif;">8</div><div class="t" style="left:567.00px;top:422.15px;font-size:13.4px;line-height:13.4px;color:#252423;font-weight:normal;font-style:normal;font-family:'Liberation Sans', sans-serif;">Mailed check</div><div class="t" style="right:629.50px;top:422.15px;text-align:right;font-size:13.4px;line-height:13.4px;color:#252423;font-weight:normal;font-style:italic;font-family:'Liberation Sans', sans-serif;">29.75</div><div class="t" style="right:430.00px;top:422.15px;text-align:right;font-size:13.4px;line-height:13.4px;color:#252423;font-weight:normal;font-style:italic;font-family:'Liberation Sans', sans-serif;">301.9</div><div class="t" style="left:1165.50px;top:422.15px;font-size:13.4px;line-height:13.4px;color:#252423;font-weight:normal;font-style:normal;font-family:'Liberation Sans', sans-serif;">No</div><div class="t" style="right:30.50px;top:422.15px;text-align:right;font-size:13.4px;line-height:13.4px;color:#252423;font-weight:normal;font-style:italic;font-family:'Liberation Sans', sans-serif;">331.65</div><div class="t" style="left:339.00px;top:447.64px;width:36px;text-align:center;font-size:15.5px;line-height:15.5px;color:#605e5c;font-weight:normal;font-style:normal;font-family:'Liberation Sans', sans-serif;">9</div><div class="t" style="left:567.00px;top:448.42px;font-size:13.4px;line-height:13.4px;color:#252423;font-weight:normal;font-style:normal;font-family:'Liberation Sans', sans-serif;">Electronic check</div><div class="t" style="right:629.50px;top:448.42px;text-align:right;font-size:13.4px;line-height:13.4px;color:#252423;font-weight:normal;font-style:italic;font-family:'Liberation Sans', sans-serif;">104.8</div><div class="t" style="right:430.00px;top:448.42px;text-align:right;font-size:13.4px;line-height:13.4px;color:#252423;font-weight:normal;font-style:italic;font-family:'Liberation Sans', sans-serif;">3046.05</div><div class="t" style="left:1165.50px;top:448.42px;font-size:13.4px;line-height:13.4px;color:#252423;font-weight:normal;font-style:normal;font-family:'Liberation Sans', sans-serif;">Yes</div><div class="t" style="right:30.50px;top:448.42px;text-align:right;font-size:13.4px;line-height:13.4px;color:#252423;font-weight:normal;font-style:italic;font-family:'Liberation Sans', sans-serif;">3150.85</div><div class="t" style="left:339.00px;top:473.91px;width:36px;text-align:center;font-size:15.5px;line-height:15.5px;color:#605e5c;font-weight:normal;font-style:normal;font-family:'Liberation Sans', sans-serif;">10</div><div class="t" style="left:567.00px;top:474.69px;font-size:13.4px;line-height:13.4px;color:#252423;font-weight:normal;font-style:normal;font-family:'Liberation Sans', sans-serif;letter-spacing:0.2px">Bank transfer (automatic)</div><div class="t" style="right:629.50px;top:474.69px;text-align:right;font-size:13.4px;line-height:13.4px;color:#252423;font-weight:normal;font-style:italic;font-family:'Liberation Sans', sans-serif;">56.15</div><div class="t" style="right:430.00px;top:474.69px;text-align:right;font-size:13.4px;line-height:13.4px;color:#252423;font-weight:normal;font-style:italic;font-family:'Liberation Sans', sans-serif;">3487.95</div><div class="t" style="left:1165.50px;top:474.69px;font-size:13.4px;line-height:13.4px;color:#252423;font-weight:normal;font-style:normal;font-family:'Liberation Sans', sans-serif;">No</div><div class="t" style="right:30.50px;top:474.69px;text-align:right;font-size:13.4px;line-height:13.4px;color:#252423;font-weight:normal;font-style:italic;font-family:'Liberation Sans', sans-serif;">3544.1</div><div class="t" style="left:339.00px;top:500.18px;width:36px;text-align:center;font-size:15.5px;line-height:15.5px;color:#605e5c;font-weight:normal;font-style:normal;font-family:'Liberation Sans', sans-serif;">11</div><div class="t" style="left:567.00px;top:500.96px;font-size:13.4px;line-height:13.4px;color:#252423;font-weight:normal;font-style:normal;font-family:'Liberation Sans', sans-serif;">Mailed check</div><div class="t" style="right:629.50px;top:500.96px;text-align:right;font-size:13.4px;line-height:13.4px;color:#252423;font-weight:normal;font-style:italic;font-family:'Liberation Sans', sans-serif;">49.95</div><div class="t" style="right:430.00px;top:500.96px;text-align:right;font-size:13.4px;line-height:13.4px;color:#252423;font-weight:normal;font-style:italic;font-family:'Liberation Sans', sans-serif;">587.45</div><div class="t" style="left:1165.50px;top:500.96px;font-size:13.4px;line-height:13.4px;color:#252423;font-weight:normal;font-style:normal;font-family:'Liberation Sans', sans-serif;">No</div><div class="t" style="right:30.50px;top:500.96px;text-align:right;font-size:13.4px;line-height:13.4px;color:#252423;font-weight:normal;font-style:italic;font-family:'Liberation Sans', sans-serif;">637.4</div><div class="r" style="left:376px;top:232px;width:185px;height:295px;overflow:hidden"><div class="t" style="left:-10.50px;top:6.26px;font-size:13.4px;line-height:13.4px;color:#252423;font-weight:normal;font-style:normal;font-family:'Liberation Sans', sans-serif;">Yes</div><div class="t" style="left:-9.00px;top:32.53px;font-size:13.4px;line-height:13.4px;color:#252423;font-weight:normal;font-style:normal;font-family:'Liberation Sans', sans-serif;">No</div><div class="t" style="left:-10.50px;top:58.80px;font-size:13.4px;line-height:13.4px;color:#252423;font-weight:normal;font-style:normal;font-family:'Liberation Sans', sans-serif;">Yes</div><div class="t" style="left:-9.00px;top:85.07px;font-size:13.4px;line-height:13.4px;color:#252423;font-weight:normal;font-style:normal;font-family:'Liberation Sans', sans-serif;">No</div><div class="t" style="left:-10.50px;top:111.34px;font-size:13.4px;line-height:13.4px;color:#252423;font-weight:normal;font-style:normal;font-family:'Liberation Sans', sans-serif;">Yes</div><div class="t" style="left:-10.50px;top:137.61px;font-size:13.4px;line-height:13.4px;color:#252423;font-weight:normal;font-style:normal;font-family:'Liberation Sans', sans-serif;">Yes</div><div class="t" style="left:-10.50px;top:163.88px;font-size:13.4px;line-height:13.4px;color:#252423;font-weight:normal;font-style:normal;font-family:'Liberation Sans', sans-serif;">Yes</div><div class="t" style="left:-9.00px;top:190.15px;font-size:13.4px;line-height:13.4px;color:#252423;font-weight:normal;font-style:normal;font-family:'Liberation Sans', sans-serif;">No</div><div class="t" style="left:-10.50px;top:216.42px;font-size:13.4px;line-height:13.4px;color:#252423;font-weight:normal;font-style:normal;font-family:'Liberation Sans', sans-serif;">Yes</div><div class="t" style="left:-9.00px;top:242.69px;font-size:13.4px;line-height:13.4px;color:#252423;font-weight:normal;font-style:normal;font-family:'Liberation Sans', sans-serif;">No</div><div class="t" style="left:-10.50px;top:268.96px;font-size:13.4px;line-height:13.4px;color:#252423;font-weight:normal;font-style:normal;font-family:'Liberation Sans', sans-serif;">Yes</div></div><svg class="s" style="left:0;top:0" width="1586" height="527" viewBox="0 0 1586 527"><path d="M320.5 161.8 L313.5 168.4 L320.5 175" fill="none" stroke="#555" stroke-width="1.8"/><rect x="16.5" y="204.5" width="15.0" height="14.0" fill="#fff" stroke="#6f6f6f" stroke-width="1.2"/><line x1="21.5" y1="204.5" x2="21.5" y2="218.5" stroke="#9a9a9a" stroke-width="0.9"/><line x1="26.5" y1="204.5" x2="26.5" y2="218.5" stroke="#9a9a9a" stroke-width="0.9"/><line x1="16.5" y1="209.5" x2="31.5" y2="209.5" stroke="#9a9a9a" stroke-width="0.9"/><line x1="16.5" y1="213.5" x2="31.5" y2="213.5" stroke="#9a9a9a" stroke-width="0.9"/><rect x="16" y="203.9" width="16.1" height="3" fill="#4a80bd"/><path d="M355.5 168.5 C362 172 368 178 372.5 184.3" fill="none" stroke="#c8c8c8" stroke-width="2.3" stroke-linecap="round"/><path d="M372.8 168.8 C366 171.5 360 177 355.3 184" fill="none" stroke="#c8c8c8" stroke-width="2.5" stroke-linecap="round"/><path d="M404 175.8 L410.3 182.6 L419.8 169" fill="none" stroke="#cbcbcb" stroke-width="2.6"/><path d="M455.3 168.3 C454.6 166.6 452.2 166.6 451.3 169.2 C450.3 172.5 449 178.5 447.9 182.2 C447.2 184.6 445.7 185 445.1 183.6" fill="none" stroke="#6a6a6a" stroke-width="1.4" stroke-linecap="round"/><path d="M447.9 172.6 H453.9" stroke="#6a6a6a" stroke-width="1.2"/><path d="M451.8 175.8 C453.2 174.6 454.2 175 454.7 176.6 L456.2 180.2 C456.8 181.7 458 181.8 458.9 180.6" fill="none" stroke="#6a6a6a" stroke-width="1.3"/><path d="M459.8 175.2 C458.7 174.6 457.8 175 456.8 176.2 L453.4 180.6 C452.6 181.7 451.9 181.8 451.2 181.4" fill="none" stroke="#6a6a6a" stroke-width="1.3"/><path d="M1561.6 174 L1567.6 180 L1573.6 174" fill="none" stroke="#555" stroke-width="2.6"/><rect x="345.5" y="205.5" width="15.0" height="14.0" fill="#fff" stroke="#6f6f6f" stroke-width="1.2"/><line x1="350.5" y1="205.5" x2="350.5" y2="219.5" stroke="#9a9a9a" stroke-width="0.9"/><line x1="355.5" y1="205.5" x2="355.5" y2="219.5" stroke="#9a9a9a" stroke-width="0.9"/><line x1="345.5" y1="210.5" x2="360.5" y2="210.5" stroke="#9a9a9a" stroke-width="0.9"/><line x1="345.5" y1="215.5" x2="360.5" y2="215.5" stroke="#9a9a9a" stroke-width="0.9"/><rect x="345" y="205" width="15.8" height="2.8" fill="#4a80bd"/><path d="M362.2 216 H369 L365.6 219.8 Z" fill="#666"/><text x="564.6" y="216.8" font-family="Liberation Sans" font-size="11" fill="#4a4a4a" stroke="#4a4a4a" stroke-width="0.25">A</text><text x="572.0" y="212.6" font-family="Liberation Sans" font-size="10.3" fill="#4a4a4a" stroke="#4a4a4a" stroke-width="0.25">B</text><text x="576.4" y="221" font-family="Liberation Sans" font-size="10.6" fill="#4a4a4a" stroke="#4a4a4a" stroke-width="0.25">C</text><text x="1163.9" y="216.8" font-family="Liberation Sans" font-size="11" fill="#4a4a4a" stroke="#4a4a4a" stroke-width="0.25">A</text><text x="1171.3" y="212.6" font-family="Liberation Sans" font-size="10.3" fill="#4a4a4a" stroke="#4a4a4a" stroke-width="0.25">B</text><text x="1175.7" y="221" font-family="Liberation Sans" font-size="10.6" fill="#4a4a4a" stroke="#4a4a4a" stroke-width="0.25">C</text><svg x="376" y="200" width="20" height="26" overflow="hidden"><g transform="translate(-376 -200)"><text x="364.7" y="216.8" font-family="Liberation Sans" font-size="11" fill="#4a4a4a" stroke="#4a4a4a" stroke-width="0.25">A</text><text x="372.1" y="212.6" font-family="Liberation Sans" font-size="10.3" fill="#4a4a4a" stroke="#4a4a4a" stroke-width="0.25">B</text><text x="376.5" y="221" font-family="Liberation Sans" font-size="10.6" fill="#4a4a4a" stroke="#4a4a4a" stroke-width="0.25">C</text></g></svg><text x="1364.8" y="210.6" font-family="Liberation Sans" font-size="8.7" letter-spacing="0.1" fill="#484644" stroke="#484644" stroke-width="0.15">ABC</text><text x="1364.6" y="221.6" font-family="Liberation Sans" font-size="10.4" letter-spacing="0.25" fill="#484644" stroke="#484644" stroke-width="0.2">123</text></svg><div class="r" style="left:1561px;top:232px;width:20px;height:295px;background:#efefef;"></div><div class="r" style="left:1562px;top:274px;width:19px;height:253px;background:#cdcdcd;"></div><svg class="s" style="left:1563px;top:250px" width="18" height="18" viewBox="0 0 18 18"><path d="M3 13.5 L9 6.5 L15 13.5" fill="none" stroke="#606060" stroke-width="2.6"/></svg></body></html>
